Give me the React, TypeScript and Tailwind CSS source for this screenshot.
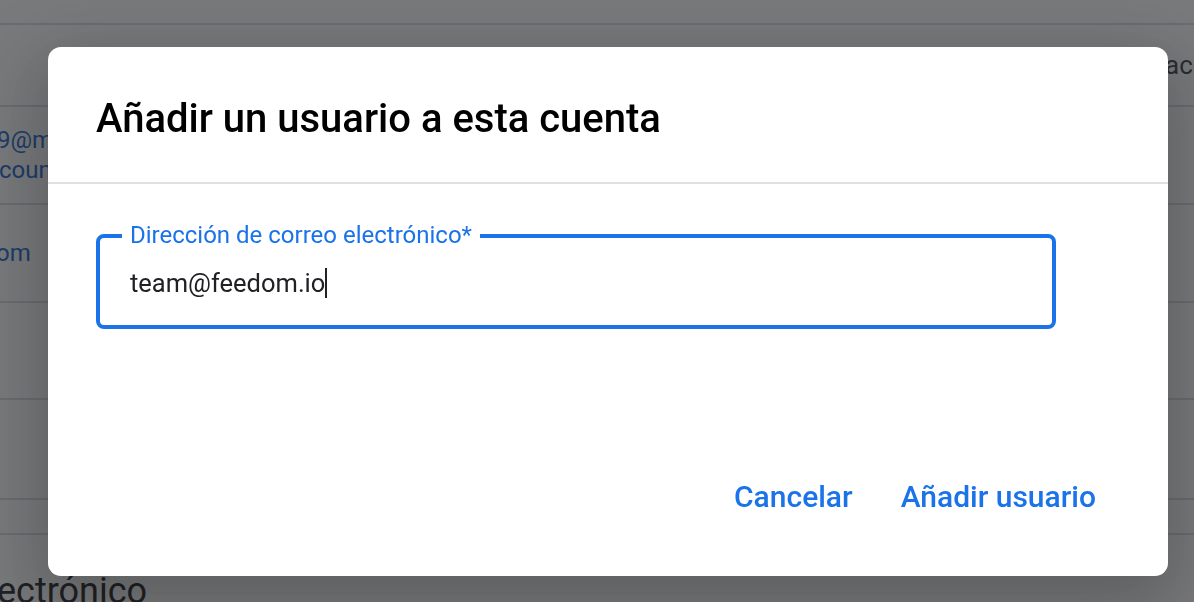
const roboto = { fontFamily: "Roboto, 'Noto Sans', sans-serif" };

function BackgroundPage() {
  return (
    <div className="w-[1194px] h-[602px] overflow-hidden bg-white text-[#202124]" style={roboto}>
      <div className="h-[25px] border-b-2 border-[#dadce0]" />
      <div className="h-[82px] border-b-2 border-[#dadce0] flex items-center">
        <span className="ml-[1165px] whitespace-nowrap text-[26px] text-[#3c4043]">acceso</span>
      </div>
      <div className="h-[98px] border-b-2 border-[#dadce0] flex flex-col justify-center text-[24px] leading-[30px] text-[#1967d2]">
        <span className="-ml-[3px] whitespace-nowrap">9@mail.example.com</span>
        <span className="-ml-[1px] whitespace-nowrap">count.admin</span>
      </div>
      <div className="h-[98px] border-b-2 border-[#dadce0] flex items-center text-[24px] text-[#1967d2]">
        <span className="-ml-[4px] whitespace-nowrap">om</span>
      </div>
      <div className="h-[97px] border-b-2 border-[#dadce0]" />
      <div className="h-[100px] border-b-2 border-[#dadce0]" />
      <div className="h-[35px] border-b-2 border-[#dadce0]" />
      <div className="pt-[34px] text-[36px] leading-[44px] text-[#202124]">
        <span className="-ml-[3px] whitespace-nowrap">ectrónico</span>
      </div>
    </div>
  );
}

function EmailField() {
  return (
    <div className="relative w-[960px] h-[95px] rounded-[8px] border-4 border-[#1a73e8] flex items-center pl-[30px]">
      <span className="absolute -top-[18px] left-[22px] bg-white px-[8px] text-[24px] leading-[30px] text-[#1a73e8]">
        Dirección de correo electrónico*
      </span>
      <span className="text-[25.5px] leading-[30px] text-[#202124] mt-[2px]">team@feedom.io</span>
      <span className="inline-block w-[2px] h-[30px] bg-[#202124] mt-[2px]" />
    </div>
  );
}

export default function App() {
  return (
    <div className="relative w-[1194px] h-[602px] overflow-hidden">
      <BackgroundPage />
      <div className="fixed inset-0 bg-[rgba(32,33,36,0.6)] pl-[48px] pt-[47px]">
        <div
          className="w-[1120px] h-[529px] bg-white rounded-[13px] flex flex-col shadow-[0_22px_70px_14px_rgba(0,0,0,0.22)]"
          style={roboto}
        >
          <div className="h-[137px] px-[48px] pt-[8px] flex items-center border-b-2 border-[#e0e0e0]">
            <h1 className="text-[40px] leading-[48px] font-medium text-black">Añadir un usuario a esta cuenta</h1>
          </div>
          <div className="px-[48px] pt-[50px]">
            <EmailField />
          </div>
          <div className="mt-auto flex justify-end pr-[48px] pb-[44px]">
            <button className="h-[72px] px-[24px] text-[30px] font-medium text-[#1a73e8]">Cancelar</button>
            <button className="h-[72px] px-[24px] text-[30px] font-medium text-[#1a73e8]">Añadir usuario</button>
          </div>
        </div>
      </div>
    </div>
  );
}
